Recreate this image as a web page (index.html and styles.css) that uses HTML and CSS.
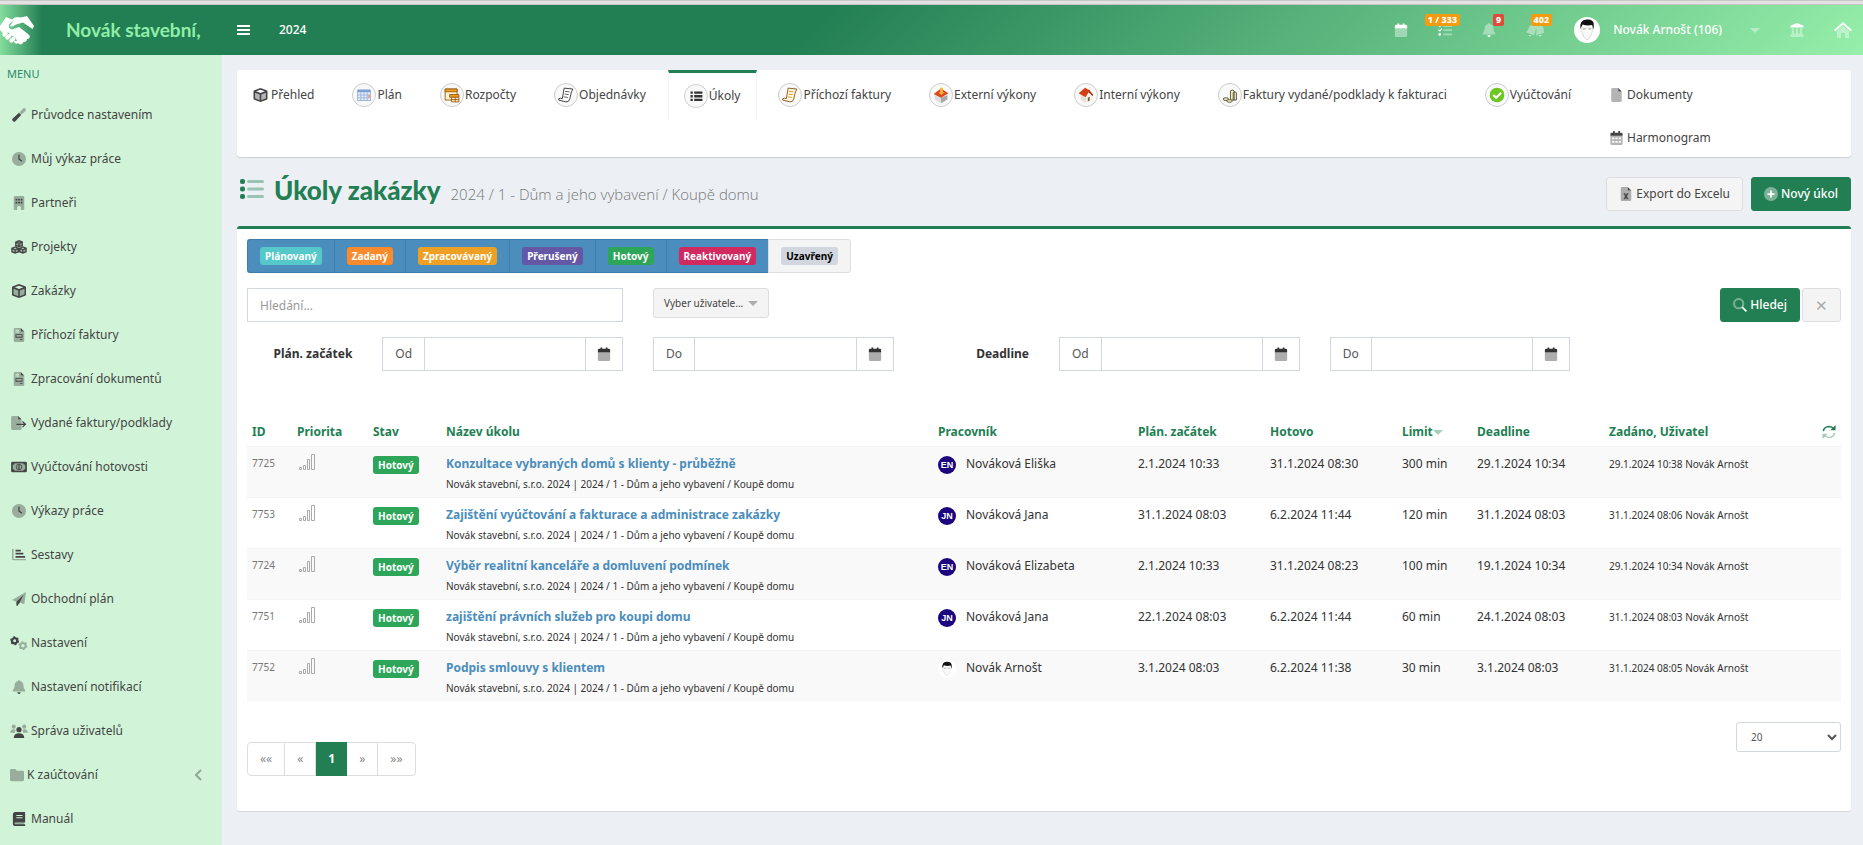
FILE: index.html
```html
<!DOCTYPE html>
<html lang="cs">
<head>
    <meta charset="UTF-8">
    <meta name="viewport" content="width=device-width, initial-scale=1.0">
    <title>Úkoly zakázky</title>
    <link rel="stylesheet" href="styles.css">
</head>
<body>
    <!-- ikony -->
    <svg class="sprite" aria-hidden="true">
        <symbol id="i-cube" viewBox="0 0 16 16">
            <path class="dim" d="M1.5 4 8 6.5 14.5 4v8L8 15l-6.500-3z"/>
            <path fill-rule="evenodd" d="M8 0l7 2.700q1 .5 1 1.300v8q0 .9-.9 1.300L8 16 .9 13.300Q0 12.900 0 12V4q0-.8 1-1.300zM8 1.900 3 3.800 8 5.700l5-1.900zM1.800 5.300v6.500L7.100 13.900V7.300zm12.400 0L8.900 7.300v6.600l5.300-2.100z"/>
        </symbol>
        <symbol id="i-cubes" viewBox="0 0 18 16">
            <g class="dim"><path d="M5.500 2 9 3.500 12.500 2v4L9 7.500 5.500 6zM1 9l3.500 1.500L8 9v4l-3.500 1.800L1 13zM10 9l3.500 1.500L17 9v4l-3.500 1.800L10 13z"/></g>
            <path fill="none" stroke="currentColor" stroke-width="1.500" d="M5.300 2.300 9 .9l3.700 1.400v3.900L9 7.600 5.300 6.200zL9 3.700l3.700-1.400M9 3.700v4M.9 9.500 4.600 8l3.700 1.500v3.900l-3.700 1.500-3.700-1.500zl3.700 1.500 3.700-1.500M4.600 11v4M9.700 9.500 13.400 8l3.700 1.500v3.900l-3.700 1.500-3.700-1.500zl3.700 1.500 3.700-1.500M13.400 11v4"/>
        </symbol>
        <symbol id="i-wand" viewBox="0 0 16 16">
            <path class="dim" d="M13 .4q.8-.7 1.600 0l1 1q.7.800 0 1.600L11 7.500 8.500 5z"/>
            <path d="M8 5.500 10.500 8 3.500 15.300q-1 .9-2 0l-.9-.9q-.9-1 0-2z"/>
        </symbol>
        <symbol id="i-clock" viewBox="0 0 16 16">
            <circle class="dim" cx="8" cy="8" r="8"/>
            <path d="M7.200 3h1.500v4.600l3 2.200-.9 1.200L7.200 8.400z"/>
        </symbol>
        <symbol id="i-building" viewBox="0 0 16 16">
            <path class="dim" d="M2 1.500Q2 0 3.500 0h9Q14 0 14 1.500v13q0 1.500-1.500 1.500H10v-3q0-1.500-2-1.500T6 13v3H3.500Q2 16 2 14.500z"/>
            <path d="M4 3h2v2H4zM7 3h2v2H7zM10 3h2v2h-2zM4 6.500h2v2H4zM7 6.500h2v2H7zM10 6.500h2v2h-2z"/>
        </symbol>
        <symbol id="i-invoice" viewBox="0 0 16 16">
            <path class="dim" fill-rule="evenodd" d="M2 1.500Q2 0 3.500 0H10v4h4v10.500q0 1.500-1.500 1.500h-9Q2 16 2 14.500zM4 2v1h4V2zm0 2v1h4V4z"/>
            <path fill-rule="evenodd" d="M10 0l4 4h-4zM4 7h8v4H4zm1 1v2h6V8zM9 12.500h3v1H9z"/>
        </symbol>
        <symbol id="i-export" viewBox="0 0 18 16">
            <path class="dim" d="M0 1.500Q0 0 1.500 0H8v4h4v10.500q0 1.500-1.500 1.500h-9Q0 16 0 14.500z"/>
            <path d="M8 0l4 4H8zM6 8.800h8.500l-2-2 1-1 3.900 3.700-3.900 3.700-1-1 2-2H6z"/>
        </symbol>
        <symbol id="i-money" viewBox="0 0 18 16">
            <path class="dim" d="M2 4h14v8H2z"/>
            <path fill-rule="evenodd" d="M1.500 2h15Q18 2 18 3.500v9q0 1.500-1.500 1.500h-15Q0 14 0 12.500v-9Q0 2 1.500 2zM4 4Q4 5.500 2 5.500v5q2 0 2 1.500h10q0-1.500 2-1.500v-5q-2 0-2-1.500z"/>
            <path d="M8.200 5.500h1.500v5H8.200z"/>
            <circle cx="9" cy="8" r="3.200" fill="none" stroke="currentColor"/>
        </symbol>
        <symbol id="i-chart" viewBox="0 0 16 16">
            <path class="dim" d="M0 1h1.800v11.500H16V14H1.500Q0 14 0 12.500z"/>
            <path d="M4 2h6v2H4zM4 5.500h9v2H4zM4 9h11v2H4z"/>
        </symbol>
        <symbol id="i-plane" viewBox="0 0 16 16">
            <path class="dim" d="M0 9 16 0l-2 14-5-2 3-7.500L5 11z"/>
            <path d="M13 3.500 9 12l-3 4-1-.5V11z"/>
        </symbol>
        <symbol id="i-cogs" viewBox="0 0 20 16">
            <circle cx="5" cy="5.500" r="3" fill="none" stroke="currentColor" stroke-width="2.600"/>
            <circle cx="5" cy="5.500" r="4.400" fill="none" stroke="currentColor" stroke-width="1.500" stroke-dasharray="2.300 2.300"/>
            <g class="dim"><circle cx="14.500" cy="11" r="3" fill="none" stroke="currentColor" stroke-width="2"/>
            <circle cx="14.500" cy="11" r="4.300" fill="none" stroke="currentColor" stroke-width="1.500" stroke-dasharray="2.250 2.250"/></g>
        </symbol>
        <symbol id="i-bell" viewBox="0 0 16 16">
            <path class="dim" d="M7 1q0-1 1-1t1 1q4 .8 4 5 0 4 2 5.500V13H1v-1.500Q3 10 3 6q0-4.200 4-5z"/>
            <path d="M6 14h4q-.3 2-2 2t-2-2z"/>
        </symbol>
        <symbol id="i-bells" viewBox="0 0 20 16">
            <path class="dim" d="M6 2q4-2 6 2l-3 10-9-3.500q.5-1.500 2-2Q3 4 6 2zM13 2q4-1.500 6 3 1 3 1 6l-9 3q1-5 .5-9 .2-2 1.500-3z"/>
            <path d="M3 13.500l3 1q-1.500 1.500-3-1zM14 14.500l3-1q0 2.500-3 1z"/>
        </symbol>
        <symbol id="i-users" viewBox="0 0 20 16">
            <g class="dim"><circle cx="4" cy="3" r="2.300"/><circle cx="16" cy="3" r="2.300"/><path d="M0 10q0-4 4-4 2 0 2 1-1 1.500-.5 3zM20 10q0-4-4-4-2 0-2 1 1 1.500.5 3z"/></g>
            <circle cx="10" cy="6.500" r="3"/><path d="M4 16q0-5.500 6-5.500t6 5.500z"/>
        </symbol>
        <symbol id="i-folder" viewBox="0 0 16 16">
            <path class="dim" d="M0 2.500Q0 1 1.500 1H6l2 2h6.500Q16 3 16 4.500v9q0 1.500-1.500 1.500h-13Q0 15 0 13.500z"/>
        </symbol>
        <symbol id="i-book" viewBox="0 0 16 16">
            <path class="dim" d="M3.500 12H14v3H3z"/>
            <path fill-rule="evenodd" d="M4 0h10.500q.5 0 .5.500v11q0 .5-.5.500H4q-1 0-1 1t1 1h11v2H4q-3 0-3-3V3q0-3 3-3zm1 3.500v1h7v-1zm0 2.500v1h7V6z"/>
        </symbol>
        <symbol id="i-calendar" viewBox="0 0 16 16">
            <path class="dim" d="M1 5h14v9.500q0 1.500-1.500 1.500h-11Q1 16 1 14.500z"/>
            <path d="M1 3.500Q1 2 2.500 2H4V.5h2V2h4V.5h2V2h1.500Q15 2 15 3.500V6H1z"/>
        </symbol>
        <symbol id="i-calendar-grid" viewBox="0 0 16 16">
            <path class="dim" fill-rule="evenodd" d="M1 5h14v9.500q0 1.500-1.500 1.500h-11Q1 16 1 14.500zM3 7.500v2h2.500v-2zm3.800 0v2h2.500v-2zm3.800 0v2H13v-2zM3 11.500v2h2.500v-2zm3.800 0v2h2.500v-2zm3.800 0v2H13v-2z"/>
            <path d="M1 3.500Q1 2 2.500 2H4V0h2v2h4V0h2v2h1.500Q15 2 15 3.500V5.500H1z"/>
        </symbol>
        <symbol id="i-file" viewBox="0 0 16 16">
            <path class="dim" d="M2 1.500Q2 0 3.500 0H10v4h4v10.500q0 1.500-1.500 1.500h-9Q2 16 2 14.500z"/>
            <path d="M10 0l4 4h-4z"/>
        </symbol>
        <symbol id="i-excel" viewBox="0 0 16 16">
            <path class="dim" d="M2 1.500Q2 0 3.500 0H10v4h4v10.500q0 1.500-1.500 1.500h-9Q2 16 2 14.500z"/>
            <path d="M10 0l4 4h-4zM5 7h2l1 2 1-2h2l-2 3.500 2 3.500H9l-1-2-1 2H5l2-3.500z"/>
        </symbol>
        <symbol id="i-tasks" viewBox="0 0 16 16">
            <path class="dim" d="M6 2.500h10v2H6zM6 7h10v2H6zM6 12h10v2H6z"/>
            <path d="M0 3l1-.8 1 1L4 .8l.9.800L2.100 5zM0 8l1-.8 1 1 2-2.400.9.800L2.100 10z"/><circle cx="2" cy="13" r="1.500"/>
        </symbol>
        <symbol id="i-list" viewBox="0 0 24 22">
            <path class="dim" d="M8.500 2h14q1.500 0 1.500 1.500T22.500 5h-14Q7 5 7 3.500T8.500 2zM8.500 9.500h14Q24 9.500 24 11t-1.500 1.500h-14Q7 12.500 7 11t1.500-1.500zM8.500 17h14q1.500 0 1.500 1.500T22.500 20h-14Q7 20 7 18.500T8.500 17z"/>
            <rect x="0" y="1" width="5" height="5" rx="2"/><rect x="0" y="8.500" width="5" height="5" rx="2"/><rect x="0" y="16" width="5" height="5" rx="2"/>
        </symbol>
        <symbol id="i-bank" viewBox="0 0 16 16">
            <path d="M8 0l7.500 3v2H.5V3z"/>
            <path class="dim" d="M2 6h2.500v6H7V6h2v6h2.500V6H14v6.500l1.500 1.500v2H.5v-2L2 12.500z"/>
        </symbol>
        <symbol id="i-home" viewBox="0 0 18 16">
            <path class="dim" d="M3 9l6-5.500L15 9v7h-4v-5H7v5H3z"/>
            <path d="M9 0l9 8-1.200 1.400L9 2.600 1.200 9.400 0 8z"/>
        </symbol>
        <symbol id="i-plus" viewBox="0 0 16 16">
            <circle class="dim" cx="8" cy="8" r="8"/>
            <path d="M7 4h2v3h3v2H9v3H7V9H4V7h3z"/>
        </symbol>
        <symbol id="i-search" viewBox="0 0 16 16">
            <circle class="dim" cx="6.500" cy="6.500" r="5.300" fill="none" stroke="currentColor" stroke-width="2.300"/>
            <path d="M9.800 11.200l1.400-1.400 4.800 4.800-1.400 1.400z"/>
        </symbol>
        <symbol id="i-refresh" viewBox="0 0 16 16">
            <path fill="none" stroke="currentColor" stroke-width="1.800" d="M1.500 7q1-5 6.500-5.300 3.500 0 5.500 3"/><path d="M15.500 0v6h-6z"/>
            <g class="dim"><path fill="none" stroke="currentColor" stroke-width="1.800" d="M14.500 9q-1 5-6.500 5.300-3.500 0-5.500-3"/><path d="M.5 16v-6h6z"/></g>
        </symbol>
        <symbol id="i-signal" viewBox="0 0 16 16">
            <path fill="none" stroke="currentColor" d="M.5 13.500h2v2h-2zM4.500 11.500h2v4h-2zM8.500 5.500h2v10h-2zM12.500 .5h3v15h-3z"/>
        </symbol>
        <symbol id="i-face" viewBox="0 0 26 26">
            <circle cx="13" cy="13" r="13" fill="#fff"/>
            <path fill="#fafafa" stroke="#ddd" d="M7.500 11q-1 3 .8 4.500Q9 21 13 23q4-2 4.700-7.500 1.800-1.500.8-4.500z"/>
            <path fill="#111" d="M6.500 12Q5 3 12.500 2.500 20 2 19.800 8q.2 2-.6 4.500l-1-4.500q-5 1.200-9.700-.5z"/>
            <path stroke="#999" fill="none" d="M9 12h2.500M14.500 12H17"/>
        </symbol>
        <symbol id="i-hands" viewBox="0 0 34 30">
            <path fill="#fff" d="M0 11 6 2l6 2.500q4-3.500 8.500-2L27 1l7 10-1.500 3L23 7.500l-7 2q-4 3-6 1.500l4-6-5 4.500q-1 4 3 5l7-2.500 9 7q3 2 1 4.500l-2 .5q0 3-3.500 3l-1 1.500q-2.500 2-4.500-.5l-1 .8q-3 .2-3-3l3 .2-2-4-3-1q-3-5-7-3.500L3 18 0 15z"/>
            <g fill="#fff"><rect x="2" y="17" width="6" height="4" rx="2" transform="rotate(-40 5 19)"/><rect x="5" y="20" width="7" height="4" rx="2" transform="rotate(-40 8 22)"/><rect x="9" y="23" width="7" height="4" rx="2" transform="rotate(-40 12 25)"/></g>
        </symbol>
    </svg>

    <div class="topstrip"></div>
    <header class="header">
        <a href="#" class="logo">
            <svg class="logo-mark"><use href="#i-hands"/></svg>
            <span class="logo-text">Novák stavební,</span>
        </a>
        <nav class="navbar">
            <button type="button" class="burger" aria-label="Menu"><span></span><span></span><span></span></button>
            <a href="#" class="year">2024</a>
            <div class="nav-right">
                <a href="#"><svg class="icon"><use href="#i-calendar"/></svg></a>
                <a href="#"><svg class="icon"><use href="#i-tasks"/></svg><span class="badge">1 / 333</span></a>
                <a href="#"><svg class="icon"><use href="#i-bell"/></svg><span class="badge badge-red">9</span></a>
                <a href="#"><svg class="icon wide"><use href="#i-bells"/></svg><span class="badge">402</span></a>
                <a href="#" class="user"><svg class="avatar"><use href="#i-face"/></svg>Novák Arnošt (106)</a>
                <a href="#" class="user-caret"><span class="caret"></span></a>
                <a href="#"><svg class="icon"><use href="#i-bank"/></svg></a>
                <a href="#" class="home"><svg class="icon wide"><use href="#i-home"/></svg></a>
            </div>
        </nav>
    </header>

    <div class="wrapper">
        <aside class="sidebar">
            <div class="menu-title">MENU</div>
            <ul>
                <li><a href="#"><svg class="icon"><use href="#i-wand"/></svg>Průvodce nastavením</a></li>
                <li><a href="#"><svg class="icon"><use href="#i-clock"/></svg>Můj výkaz práce</a></li>
                <li><a href="#"><svg class="icon"><use href="#i-building"/></svg>Partneři</a></li>
                <li><a href="#"><svg class="icon"><use href="#i-cubes"/></svg>Projekty</a></li>
                <li><a href="#"><svg class="icon"><use href="#i-cube"/></svg>Zakázky</a></li>
                <li><a href="#"><svg class="icon"><use href="#i-invoice"/></svg>Příchozí faktury</a></li>
                <li><a href="#"><svg class="icon"><use href="#i-invoice"/></svg>Zpracování dokumentů</a></li>
                <li><a href="#"><svg class="icon"><use href="#i-export"/></svg>Vydané faktury/podklady</a></li>
                <li><a href="#"><svg class="icon"><use href="#i-money"/></svg>Vyúčtování hotovosti</a></li>
                <li><a href="#"><svg class="icon"><use href="#i-clock"/></svg>Výkazy práce</a></li>
                <li><a href="#"><svg class="icon"><use href="#i-chart"/></svg>Sestavy</a></li>
                <li><a href="#"><svg class="icon"><use href="#i-plane"/></svg>Obchodní plán</a></li>
                <li><a href="#"><svg class="icon"><use href="#i-cogs"/></svg>Nastavení</a></li>
                <li><a href="#"><svg class="icon"><use href="#i-bell"/></svg>Nastavení notifikací</a></li>
                <li><a href="#"><svg class="icon"><use href="#i-users"/></svg>Správa uživatelů</a></li>
                <li><a href="#" class="folder"><svg class="icon"><use href="#i-folder"/></svg>K zaúčtování
                    <svg class="angle" viewBox="0 0 8 12"><path d="M7 1 2 6l5 5"/></svg></a></li>
                <li><a href="#"><svg class="icon"><use href="#i-book"/></svg>Manuál</a></li>
            </ul>
        </aside>

        <main class="content">
            <nav class="tabs">
                <a href="#"><svg class="icon"><use href="#i-cube"/></svg>Přehled</a>
                <a href="#"><svg class="round" viewBox="0 0 24 24">
                    <rect x="5" y="7" width="14" height="11" fill="#e6eefb" stroke="#9db4d8"/><path fill="#7d9fd4" d="M5 6h14v3H5z"/><path stroke="#9db4d8" d="M8.500 9v9M12 9v9M15.500 9v9M5 12h14M5 15h14"/><path fill="#e9a58f" d="M16 12h3v3h-3z"/></svg>Plán</a>
                <a href="#"><svg class="round" viewBox="0 0 24 24">
                    <path fill="#fff2d0" stroke="#9a5a12" d="M4.500 5.500h13v12h-13z"/><path fill="#f0a21c" stroke="#9a5a12" d="M4.500 5.500h13v3h-13zM9.500 11.500h10v3h-10z"/><path fill="#fff2d0" stroke="#9a5a12" d="M11.500 14.500h8v5h-8zM15.500 14.500v5M11.500 17h8"/></svg>Rozpočty</a>
                <a href="#"><svg class="round" viewBox="0 0 24 24">
                    <path fill="#fff" stroke="#333" d="M10 4.500l9.500 1-1.500 3-2 8q-1 3.500-4 3l-8-2q-.5-2 2-2l2 .500z"/><path fill="none" stroke="#555" d="M11 8l5 .7M10.500 11l4.500.7M9.500 14l4.500.7"/></svg>Objednávky</a>
                <a href="#" class="active"><svg class="round" viewBox="0 0 24 24">
                    <path fill="#333" d="M6 7h2.500v2.500H6zM10 7h9v2.500h-9zM6 11h2.500v2.500H6zM10 11h9v2.500h-9zM6 15h2.500v2.500H6zM10 15h9v2.500h-9z"/></svg>Úkoly</a>
                <a href="#"><svg class="round" viewBox="0 0 24 24">
                    <path fill="#fff8e2" stroke="#8a5410" d="M10 4.500l9.500 1-1.500 3-2 8q-1 3.500-4 3l-8-2q-.5-2 2-2l2 .500z"/><path fill="none" stroke="#e09020" d="M11 8l5 .7M10.500 11l4.500.7M9.500 14l4.500.7"/></svg>Příchozí faktury</a>
                <a href="#"><svg class="round" viewBox="0 0 24 24">
                    <path fill="#ddd" d="M5 12l7 3v6l-7-4z"/><path fill="#a8a8a8" d="M12 15l7-3v5l-7 4z"/><path fill="#d9481c" d="M4 11l8-6 8 5-8 5z"/><path fill="#f5b63a" d="M11 4h3v5h2l-3.500 3L9 9h2z"/></svg>Externí výkony</a>
                <a href="#"><svg class="round" viewBox="0 0 24 24">
                    <path fill="#e6e0d4" d="M6 11l6 4v6l-6-4z"/><path fill="#f6f2ea" d="M12 15l4-6 3 3v5l-7 4z"/><path fill="#d43c14" d="M4 10l7-6 5 3-4.500 7.500z"/><path fill="#a82a0a" d="M15 6l5 6-1 1-4-4z"/><path fill="#775533" d="M14 15l2-1v4l-2 1z"/></svg>Interní výkony</a>
                <a href="#"><svg class="round" viewBox="0 0 24 24">
                    <g fill="#f2eda0" stroke="#555"><path d="M12.500 7.500q2-2 4 0v10h-4zM15.500 9.500q2-2 3.500 0v8h-3.500z"/><ellipse cx="7.500" cy="16.500" rx="3" ry="1.500"/><ellipse cx="11.500" cy="18.500" rx="3" ry="1.500"/></g></svg>Faktury vydané/podklady k fakturaci</a>
                <a href="#"><svg class="round" viewBox="0 0 24 24">
                    <circle cx="12" cy="12" r="8" fill="#6cc820"/><path fill="none" stroke="#fff" stroke-width="2.500" d="M8 12l3 3 5.500-5.500"/></svg>Vyúčtování</a>
                <div class="tab-column">
                    <a href="#"><svg class="icon"><use href="#i-file"/></svg>Dokumenty</a>
                    <a href="#"><svg class="icon"><use href="#i-calendar-grid"/></svg>Harmonogram</a>
                </div>
            </nav>

            <div class="page-head">
                <svg class="page-icon"><use href="#i-list"/></svg>
                <h1>Úkoly zakázky <small>2024 / 1 - Dům a jeho vybavení / Koupě domu</small></h1>
                <div class="page-actions">
                    <button type="button" class="btn"><svg class="icon"><use href="#i-excel"/></svg>Export do Excelu</button>
                    <button type="button" class="btn btn-primary"><svg class="icon"><use href="#i-plus"/></svg>Nový úkol</button>
                </div>
            </div>

            <section class="box">
                <div class="state-group">
                    <button type="button"><span class="label planned">Plánovaný</span></button>
                    <button type="button"><span class="label assigned">Zadaný</span></button>
                    <button type="button"><span class="label progress">Zpracovávaný</span></button>
                    <button type="button"><span class="label paused">Přerušený</span></button>
                    <button type="button"><span class="label done">Hotový</span></button>
                    <button type="button"><span class="label again">Reaktivovaný</span></button>
                    <button type="button" class="off"><span class="label closed">Uzavřený</span></button>
                </div>

                <form class="filter">
                    <input type="text" class="search" placeholder="Hledání..." aria-label="Hledání">
                    <button type="button" class="btn btn-user">Vyber uživatele... <span class="caret"></span></button>
                    <div class="filter-actions">
                        <button type="button" class="btn btn-primary"><svg class="icon"><use href="#i-search"/></svg>Hledej</button>
                        <button type="button" class="btn btn-clear" aria-label="Zrušit filtr">✕</button>
                    </div>

                    <strong class="filter-label">Plán. začátek</strong>
                    <div class="date-group">
                        <label for="start-od">Od</label>
                        <input type="text" id="start-od">
                        <button type="button" aria-label="Kalendář"><svg class="icon"><use href="#i-calendar"/></svg></button>
                    </div>
                    <div class="date-group">
                        <label for="start-do">Do</label>
                        <input type="text" id="start-do">
                        <button type="button" aria-label="Kalendář"><svg class="icon"><use href="#i-calendar"/></svg></button>
                    </div>
                    <strong class="filter-label">Deadline</strong>
                    <div class="date-group">
                        <label for="deadline-od">Od</label>
                        <input type="text" id="deadline-od">
                        <button type="button" aria-label="Kalendář"><svg class="icon"><use href="#i-calendar"/></svg></button>
                    </div>
                    <div class="date-group">
                        <label for="deadline-do">Do</label>
                        <input type="text" id="deadline-do">
                        <button type="button" aria-label="Kalendář"><svg class="icon"><use href="#i-calendar"/></svg></button>
                    </div>
                </form>

                <table class="tasks">
                    <thead>
                        <tr>
                            <th class="c-id">ID</th>
                            <th class="c-prio">Priorita</th>
                            <th class="c-state">Stav</th>
                            <th>Název úkolu</th>
                            <th class="c-worker">Pracovník</th>
                            <th class="c-date">Plán. začátek</th>
                            <th class="c-date">Hotovo</th>
                            <th class="c-limit">Limit<span class="caret"></span></th>
                            <th class="c-date">Deadline</th>
                            <th class="c-author"><div class="th-last">Zadáno, Uživatel <svg class="icon"><use href="#i-refresh"/></svg></div></th>
                        </tr>
                    </thead>
                    <tbody>
                        <tr>
                            <td class="muted">7725</td>
                            <td><svg class="signal"><use href="#i-signal"/></svg></td>
                            <td><span class="label done">Hotový</span></td>
                            <td><a href="#">Konzultace vybraných domů s klienty - průběžně</a><p>Novák stavební, s.r.o. 2024 | 2024 / 1 - Dům a jeho vybavení / Koupě domu</p></td>
                            <td><div class="worker"><span class="initials">EN</span>Nováková Eliška</div></td>
                            <td>2.1.2024 10:33</td>
                            <td>31.1.2024 08:30</td>
                            <td>300 min</td>
                            <td>29.1.2024 10:34</td>
                            <td class="small">29.1.2024 10:38 Novák Arnošt</td>
                        </tr>
                        <tr>
                            <td class="muted">7753</td>
                            <td><svg class="signal"><use href="#i-signal"/></svg></td>
                            <td><span class="label done">Hotový</span></td>
                            <td><a href="#">Zajištění vyúčtování a fakturace a administrace zakázky</a><p>Novák stavební, s.r.o. 2024 | 2024 / 1 - Dům a jeho vybavení / Koupě domu</p></td>
                            <td><div class="worker"><span class="initials">JN</span>Nováková Jana</div></td>
                            <td>31.1.2024 08:03</td>
                            <td>6.2.2024 11:44</td>
                            <td>120 min</td>
                            <td>31.1.2024 08:03</td>
                            <td class="small">31.1.2024 08:06 Novák Arnošt</td>
                        </tr>
                        <tr>
                            <td class="muted">7724</td>
                            <td><svg class="signal"><use href="#i-signal"/></svg></td>
                            <td><span class="label done">Hotový</span></td>
                            <td><a href="#">Výběr realitní kanceláře a domluvení podmínek</a><p>Novák stavební, s.r.o. 2024 | 2024 / 1 - Dům a jeho vybavení / Koupě domu</p></td>
                            <td><div class="worker"><span class="initials">EN</span>Nováková Elizabeta</div></td>
                            <td>2.1.2024 10:33</td>
                            <td>31.1.2024 08:23</td>
                            <td>100 min</td>
                            <td>19.1.2024 10:34</td>
                            <td class="small">29.1.2024 10:34 Novák Arnošt</td>
                        </tr>
                        <tr>
                            <td class="muted">7751</td>
                            <td><svg class="signal"><use href="#i-signal"/></svg></td>
                            <td><span class="label done">Hotový</span></td>
                            <td><a href="#">zajištění právních služeb pro koupi domu</a><p>Novák stavební, s.r.o. 2024 | 2024 / 1 - Dům a jeho vybavení / Koupě domu</p></td>
                            <td><div class="worker"><span class="initials">JN</span>Nováková Jana</div></td>
                            <td>22.1.2024 08:03</td>
                            <td>6.2.2024 11:44</td>
                            <td>60 min</td>
                            <td>24.1.2024 08:03</td>
                            <td class="small">31.1.2024 08:03 Novák Arnošt</td>
                        </tr>
                        <tr>
                            <td class="muted">7752</td>
                            <td><svg class="signal"><use href="#i-signal"/></svg></td>
                            <td><span class="label done">Hotový</span></td>
                            <td><a href="#">Podpis smlouvy s klientem</a><p>Novák stavební, s.r.o. 2024 | 2024 / 1 - Dům a jeho vybavení / Koupě domu</p></td>
                            <td><div class="worker"><svg class="face"><use href="#i-face"/></svg>Novák Arnošt</div></td>
                            <td>3.1.2024 08:03</td>
                            <td>6.2.2024 11:38</td>
                            <td>30 min</td>
                            <td>3.1.2024 08:03</td>
                            <td class="small">31.1.2024 08:05 Novák Arnošt</td>
                        </tr>
                    </tbody>
                </table>

                <div class="table-foot">
                    <div class="pagination">
                        <a href="#">««</a>
                        <a href="#">«</a>
                        <a href="#" class="current">1</a>
                        <a href="#">»</a>
                        <a href="#">»»</a>
                    </div>
                    <select class="page-size" aria-label="Počet na stránku">
                        <option>20</option>
                        <option>50</option>
                        <option>100</option>
                    </select>
                </div>
            </section>
        </main>
    </div>
</body>
</html>
```
FILE: styles.css
```css
* {
    box-sizing: border-box;
}
body {
    margin: 0;
    min-height: 100vh;
    display: flex;
    flex-direction: column;
    font-family: "Noto Sans", "Open Sans", sans-serif;
    font-size: 12px;
    line-height: 20px;
    color: #333;
    background-color: #ecf0f5;
}
a {
    color: inherit;
    text-decoration: none;
}
button,
input,
select {
    font: inherit;
    color: inherit;
}
button {
    cursor: pointer;
}
ul,
p {
    margin: 0;
    padding: 0;
    list-style: none;
}
.sprite {
    display: none;
}
.dim {
    opacity: 0.4;
}
.icon {
    width: 14px;
    height: 14px;
    fill: currentColor;
    flex-shrink: 0;
}
.icon.wide {
    width: 18px;
    height: 16px;
}
.caret {
    display: inline-block;
    border: 5px solid transparent;
    border-top-color: currentColor;
    border-bottom: 0;
    opacity: 0.4;
    vertical-align: middle;
}

/* hlavička */
.topstrip {
    height: 5px;
    background-color: #e2e2e2;
    border-top: 1px solid #c8c8c8;
    border-bottom: 1px solid #c8c4c6;
}
.header {
    display: flex;
    height: 50px;
    color: #fff;
    background-color: #227f53;
}
.logo {
    width: 222px;
    display: flex;
    align-items: center;
    background: linear-gradient(to right, #84dd9c 0, #227f53 42px);
}
.logo-mark {
    width: 34px;
    height: 30px;
    margin-right: 32px;
}
.logo-text {
    font-family: Lato, sans-serif;
    font-size: 19px;
    font-weight: 700;
    color: #90eea8;
}
.navbar {
    flex: 1;
    display: flex;
    align-items: center;
    background: linear-gradient(135deg, #227f53 36%, #96efaa 100%);
}
.burger {
    display: flex;
    flex-direction: column;
    gap: 2px;
    padding: 15px;
    border: 0;
    background: none;
}
.burger span {
    width: 13px;
    height: 2px;
    background-color: #fff;
}
.year {
    padding: 15px 14px;
    font-weight: 500;
}
.nav-right {
    display: flex;
    align-items: center;
    margin-left: auto;
}
.nav-right a {
    position: relative;
    display: flex;
    align-items: center;
    height: 50px;
    padding: 0 15px;
}
.nav-right .home {
    padding-right: 11px;
}
.nav-right .user {
    gap: 13px;
    font-weight: 500;
}
.nav-right .user-caret {
    padding-left: 13px;
}
.avatar {
    width: 26px;
    height: 26px;
}
.badge {
    position: absolute;
    top: 9px;
    right: 7px;
    padding: 0 3px;
    border-radius: 2px;
    background-color: #f39c12;
    font-size: 9px;
    font-weight: 800;
    line-height: 12px;
    white-space: nowrap;
}
.badge-red {
    background-color: #dd4b39;
}

/* levé menu */
.wrapper {
    flex: 1;
    display: flex;
}
.sidebar {
    width: 222px;
    flex-shrink: 0;
    background-color: #d1f4d8;
    color: #444;
}
.menu-title {
    padding: 9px 7px 8px;
    font-size: 11px;
    color: #2b8a6a;
}
.sidebar a {
    display: flex;
    align-items: center;
    height: 44px;
    padding: 1px 0 0 10px;
}
.sidebar .icon {
    width: 18px;
    margin-right: 3px;
}
.sidebar .folder .icon {
    width: 14px;
}
.angle {
    width: 8px;
    height: 12px;
    margin: 0 20px 0 auto;
    fill: none;
    stroke: #8fa595;
    stroke-width: 2;
}

/* obsah */
.content {
    flex: 1;
    min-width: 0;
    padding: 15px 12px 15px 15px;
}
.tabs {
    display: flex;
    align-items: flex-start;
    gap: 5px;
    padding-bottom: 1px;
    background-color: #fff;
    border-radius: 3px;
    box-shadow: 0 1px 1px rgba(0, 0, 0, 0.15);
    color: #444;
}
.tabs a {
    display: flex;
    align-items: center;
    height: 43px;
    padding: 6px 16px 0 15px;
    border: 1px solid transparent;
    border-width: 0 1px;
    white-space: nowrap;
}
.tabs .active {
    height: 48px;
    padding: 0 16px 0 15px;
    border-color: #f4f4f4;
    border-top: 3px solid #227f53;
}
.tabs .icon {
    width: 15px;
    margin-right: 3px;
}
.round {
    width: 24px;
    height: 24px;
    margin-right: 1px;
    border: 1px solid #ccc;
    border-radius: 50%;
    background-color: #f9f9f9;
}
.page-head {
    display: flex;
    align-items: center;
    height: 69px;
    padding: 20px 0 15px;
}
.page-icon {
    width: 24px;
    height: 22px;
    margin: 0 10px 10px 3px;
    fill: #227f53;
    color: #227f53;
}
h1 {
    display: flex;
    align-items: baseline;
    gap: 10px;
    margin: 0 0 5px;
    font-family: Lato, sans-serif;
    font-size: 26px;
    font-weight: 900;
    line-height: 26px;
    color: #227f53;
}
h1 small {
    font-family: "Open Sans", "Noto Sans", sans-serif;
    font-size: 15px;
    font-weight: 300;
    color: #777;
}
.page-actions {
    display: flex;
    gap: 8px;
    margin-left: auto;
}
.btn {
    display: flex;
    align-items: center;
    height: 34px;
    padding: 0 12px;
    border: 1px solid #ddd;
    border-radius: 3px;
    background-color: #f4f4f4;
    color: #444;
}
.btn .icon {
    margin-right: 3px;
}
.btn-primary {
    border-color: #227f53;
    background-color: #227f53;
    color: #fff;
    font-weight: 500;
}
.box {
    padding: 10px 10px 35px;
    border-top: 3px solid #227f53;
    border-radius: 3px;
    background-color: #fff;
    box-shadow: 0 1px 1px rgba(0, 0, 0, 0.1);
}
.label {
    display: inline-block;
    padding: 0 5px;
    border-radius: 3px;
    color: #fff;
    font-size: 10px;
    font-weight: 700;
    line-height: 18px;
}
.planned { background-color: #55c9c9; }
.assigned { background-color: #fa8a2c; }
.progress { background-color: #eea024; }
.paused { background-color: #6457a6; }
.done { background-color: #2ea65a; }
.again { background-color: #d02a60; }
.closed { background-color: #d2d6de; color: #000; }

.state-group {
    display: flex;
}
.state-group button {
    height: 34px;
    padding: 0 12px;
    border: 1px solid #417dab;
    border-right-width: 0;
    background-color: #4b8dbc;
    line-height: 18px;
}
.state-group button:first-child {
    border-radius: 3px 0 0 3px;
}
.state-group .off {
    border: 1px solid #ddd;
    border-radius: 0 3px 3px 0;
    background-color: #f4f4f4;
}

/* filtr */
.filter {
    display: grid;
    grid-template-columns: repeat(12, 1fr);
    gap: 15px 30px;
    margin-top: 15px;
}
.search {
    grid-column: span 3;
    height: 34px;
    padding: 0 12px;
    border: 1px solid #d2d6de;
}
.search::placeholder {
    color: #999;
}
.btn-user {
    grid-column: span 2;
    justify-self: start;
    height: 30px;
    padding: 0 10px;
    gap: 5px;
    font-size: 10px;
    white-space: nowrap;
}
.filter-actions {
    grid-column: span 7;
    display: flex;
    justify-content: flex-end;
    gap: 2px;
}
.btn-clear {
    font-size: 15px;
    color: #aaa;
}
.filter-label {
    display: flex;
    align-items: center;
    justify-content: flex-end;
    white-space: nowrap;
}
.date-group {
    grid-column: span 2;
    display: flex;
    height: 34px;
    border: 1px solid #d2d6de;
}
.date-group label {
    padding: 6px 12px;
    color: #555;
}
.date-group input {
    flex: 1;
    width: 0;
    min-width: 0;
    border: 1px solid #d2d6de;
    border-width: 0 1px;
}
.date-group button {
    padding: 0 11px;
    border: 0;
    background: none;
    line-height: 0;
}

/* tabulka úkolů */
.tasks {
    width: 100%;
    margin-top: 45px;
    border-collapse: collapse;
    table-layout: fixed;
}
.tasks th {
    padding: 6px 5px 4px;
    text-align: left;
    white-space: nowrap;
    color: #227f53;
}
.tasks td {
    height: 51px;
    padding: 7px 5px 3px;
    vertical-align: top;
    border-top: 1px solid #f4f4f4;
}
.tasks tbody tr:nth-child(odd) {
    background-color: #f9f9f9;
}
.tasks td a {
    font-weight: 700;
    color: #4b8dbc;
}
.tasks p,
.tasks .small {
    font-size: 10px;
}
.tasks .muted {
    padding-top: 6px;
    font-size: 10px;
    color: #777;
}
.tasks .label {
    margin-top: 2px;
}
.c-id { width: 45px; }
.c-prio { width: 76px; }
.c-state { width: 73px; }
.c-worker { width: 200px; }
.c-date { width: 132px; }
.c-limit { width: 75px; }
.c-author { width: 237px; }
.th-last {
    display: flex;
    align-items: center;
    justify-content: space-between;
}
.signal {
    width: 16px;
    height: 16px;
    margin: 0 2px;
    color: #aaa;
}
.worker {
    display: flex;
    gap: 10px;
}
.initials {
    width: 18px;
    height: 18px;
    margin-top: 2px;
    border-radius: 50%;
    background-color: #1c057e;
    color: #fff;
    font-family: "Liberation Sans", sans-serif;
    font-size: 9px;
    font-weight: 700;
    line-height: 19px;
    text-align: center;
}
.face {
    width: 18px;
    height: 18px;
    margin-top: 2px;
}

.table-foot {
    display: flex;
    align-items: flex-start;
    justify-content: space-between;
    padding-top: 20px;
}
.pagination {
    display: flex;
    margin-top: 20px;
    border: 1px solid #ddd;
    border-radius: 4px;
    color: #888;
}
.pagination a {
    padding: 6px 12px;
    border-right: 1px solid #ddd;
}
.pagination a:last-child {
    border-right: 0;
}
.pagination .current {
    margin: -1px 0;
    padding: 7px 12px;
    border: 0;
    background-color: #227f53;
    color: #fff;
    font-weight: 700;
}
.page-size {
    width: 105px;
    height: 30px;
    padding: 0 10px;
    border: 1px solid #d2d6de;
    border-radius: 3px;
    background-color: #fff;
    font-size: 10px;
    color: #555;
}
```
